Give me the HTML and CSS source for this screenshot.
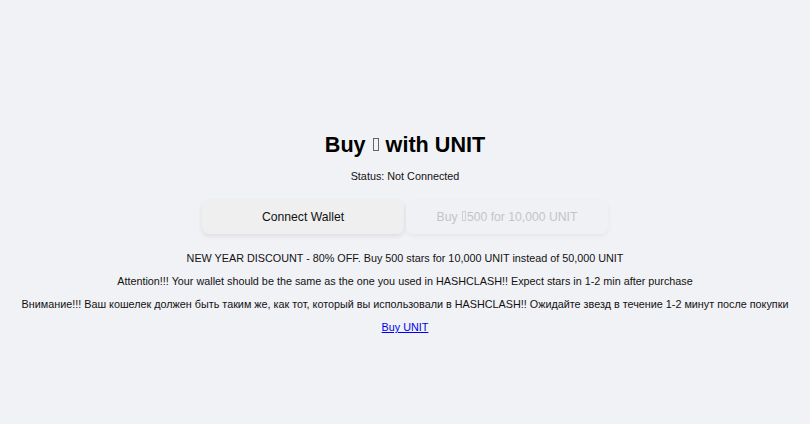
FILE: index.html
```html
<!DOCTYPE html>
<html lang="en">
<head>
<meta charset="utf-8">
<title>Buy with UNIT</title>
<link rel="stylesheet" href="styles.css">
</head>
<body>
<main class="app">
  <h1 class="title">Buy <span class="tofu" title="⭐"></span> with UNIT</h1>
  <p class="status">Status: Not Connected</p>
  <div class="actions">
    <button class="btn btn-primary">Connect Wallet</button>
    <button class="btn btn-buy" disabled>Buy <span class="tofu tofu-sm" title="⭐"></span>500 for 10,000 UNIT</button>
  </div>
  <p class="note first">NEW YEAR DISCOUNT - 80% OFF. Buy 500 stars for 10,000 UNIT instead of 50,000 UNIT</p>
  <p class="note">Attention!!! Your wallet should be the same as the one you used in HASHCLASH!! Expect stars in 1-2 min after purchase</p>
  <p class="note">Внимание!!! Ваш кошелек должен быть таким же, как тот, который вы использовали в HASHCLASH!! Ожидайте звезд в течение 1-2 минут после покупки</p>
  <p class="note"><a class="link" href="#">Buy UNIT</a></p>
</main>
</body>
</html>
```
FILE: styles.css
```css
html, body {
  margin: 0;
  padding: 0;
  background: #f1f2f6;
}
body {
  font-family: "Liberation Sans", Arial, sans-serif;
  color: #111;
}
.app {
  display: flex;
  flex-direction: column;
  align-items: center;
  text-align: center;
  padding-top: 132px;
}
.title {
  font-size: 21.6px;
  font-weight: bold;
  line-height: 25px;
  margin: 0;
  color: #000;
}
.tofu {
  display: inline-block;
  width: 4px;
  height: 11px;
  border: 1px solid #666;
  margin: 0 1px 0 1px;
  vertical-align: 1px;
}
.tofu-sm {
  width: 2px;
  height: 8px;
  border-color: #d0d0d4;
  margin: 0 1px 0 1px;
  vertical-align: 0;
}
.status {
  font-size: 10.8px;
  line-height: 12px;
  margin: 13px 0 0;
}
.actions {
  display: flex;
  gap: 2px;
  margin-top: 18px;
}
.btn {
  width: 202px;
  height: 34px;
  border: none;
  border-radius: 7px;
  font-family: "Liberation Sans", Arial, sans-serif;
  font-size: 12.2px;
  padding: 0;
  box-shadow: 0 2px 5px rgba(0, 0, 0, 0.09);
}
.btn-primary {
  background: #efefef;
  color: #111;
}
.btn-buy {
  background: #f0f1f4;
  color: #c4c4c8;
  box-shadow: 0 2px 5px rgba(0, 0, 0, 0.05);
}
.note {
  font-size: 10.8px;
  line-height: 12px;
  margin: 11px 0 0;
}
.note.first {
  margin-top: 18px;
}
.link {
  color: #0000ee;
  text-decoration: underline;
}
```
